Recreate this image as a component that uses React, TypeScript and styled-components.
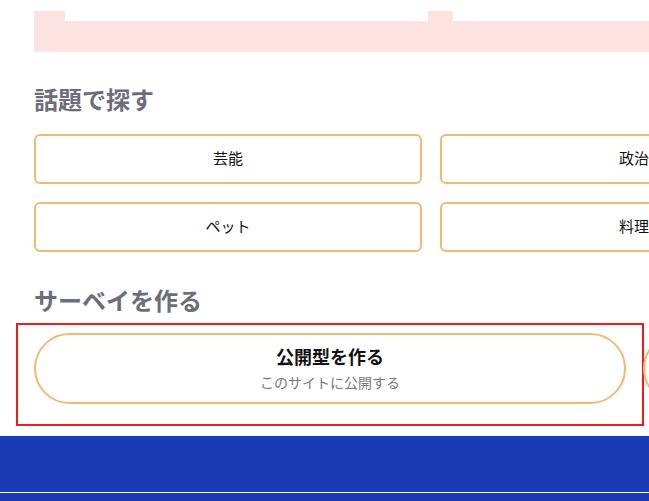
import React from "react";
import styled, { createGlobalStyle } from "styled-components";

const Global = createGlobalStyle`
  html, body { margin: 0; padding: 0; background: #ffffff; overflow: hidden; }
  body { font-family: "Noto Sans CJK JP", "Noto Sans", sans-serif; }
  * { box-sizing: border-box; }
`;

const Page = styled.div`
  width: 649px;
  height: 501px;
  overflow: hidden;
  background: #ffffff;
`;

const Main = styled.div`
  padding-left: 34px;
  width: 900px;
`;

const PinkBand = styled.div`
  margin-top: 11px;
  height: 41px;
  width: 860px;
  background: #fde2e2;
  padding-left: 31px;
`;

const CardRow = styled.div`
  display: flex;
  gap: 25px;
  transform: translateY(-11px);
`;

const MiniCard = styled.div`
  width: 363px;
  height: 21px;
  background: #ffffff;
  flex: none;
`;

const SectionTitle = styled.h2<{ $top: number; $bottom: number }>`
  margin: ${(p) => p.$top}px 0 ${(p) => p.$bottom}px 0;
  font-size: 24px;
  line-height: 36px;
  font-weight: 700;
  color: #6c6d7b;
  letter-spacing: 0;
`;

const TopicGrid = styled.div`
  display: grid;
  grid-template-columns: 388px 388px;
  gap: 18px;
`;

const TopicButton = styled.button`
  height: 50px;
  border: 2px solid #f1ba74;
  border-radius: 6px;
  background: #ffffff;
  font-family: inherit;
  font-size: 15px;
  color: #111111;
  display: flex;
  align-items: center;
  justify-content: center;
  padding: 0 0 3px 0;
`;

const SurveyBox = styled.div`
  margin: 5px 0 0 16px;
  width: 628px;
  height: 103px;
  border: 2px solid #f01c1c;
  padding: 8px 16px 0 16px;
  display: flex;
  gap: 17px;
`;

const Pill = styled.div`
  flex: none;
  width: 592px;
  height: 71px;
  border: 2px solid #f1ba74;
  border-radius: 36px;
  background: #ffffff;
  display: flex;
  flex-direction: column;
  align-items: center;
  justify-content: center;
  gap: 4px;
  padding: 0 0 2px 0;
`;

const PillTitle = styled.span`
  font-size: 18px;
  line-height: 24px;
  font-weight: 700;
  color: #111111;
`;

const PillSub = styled.span`
  font-size: 14px;
  line-height: 20px;
  color: #7a7a7a;
`;

const Footer = styled.footer`
  margin-top: 10px;
  background: #1b3bb5;
`;

const FooterTop = styled.div`
  height: 56px;
`;

const FooterRule = styled.div`
  height: 1px;
  background: #ffffff;
`;

const FooterBottom = styled.div`
  height: 40px;
`;

const topics = ["芸能", "政治", "ペット", "料理"];

export default function App() {
  return (
    <Page>
      <Global />
      <Main>
        <PinkBand>
          <CardRow>
            <MiniCard />
            <MiniCard />
          </CardRow>
        </PinkBand>
        <SectionTitle $top={29} $bottom={17}>話題で探す</SectionTitle>
        <TopicGrid>
          {topics.map((t) => (
            <TopicButton key={t}>{t}</TopicButton>
          ))}
        </TopicGrid>
        <SectionTitle $top={30} $bottom={0}>サーベイを作る</SectionTitle>
      </Main>
      <SurveyBox>
        <Pill>
          <PillTitle>公開型を作る</PillTitle>
          <PillSub>このサイトに公開する</PillSub>
        </Pill>
        <Pill aria-label="非公開型を作る" />
      </SurveyBox>
      <Footer>
        <FooterTop />
        <FooterRule />
        <FooterBottom />
      </Footer>
    </Page>
  );
}
